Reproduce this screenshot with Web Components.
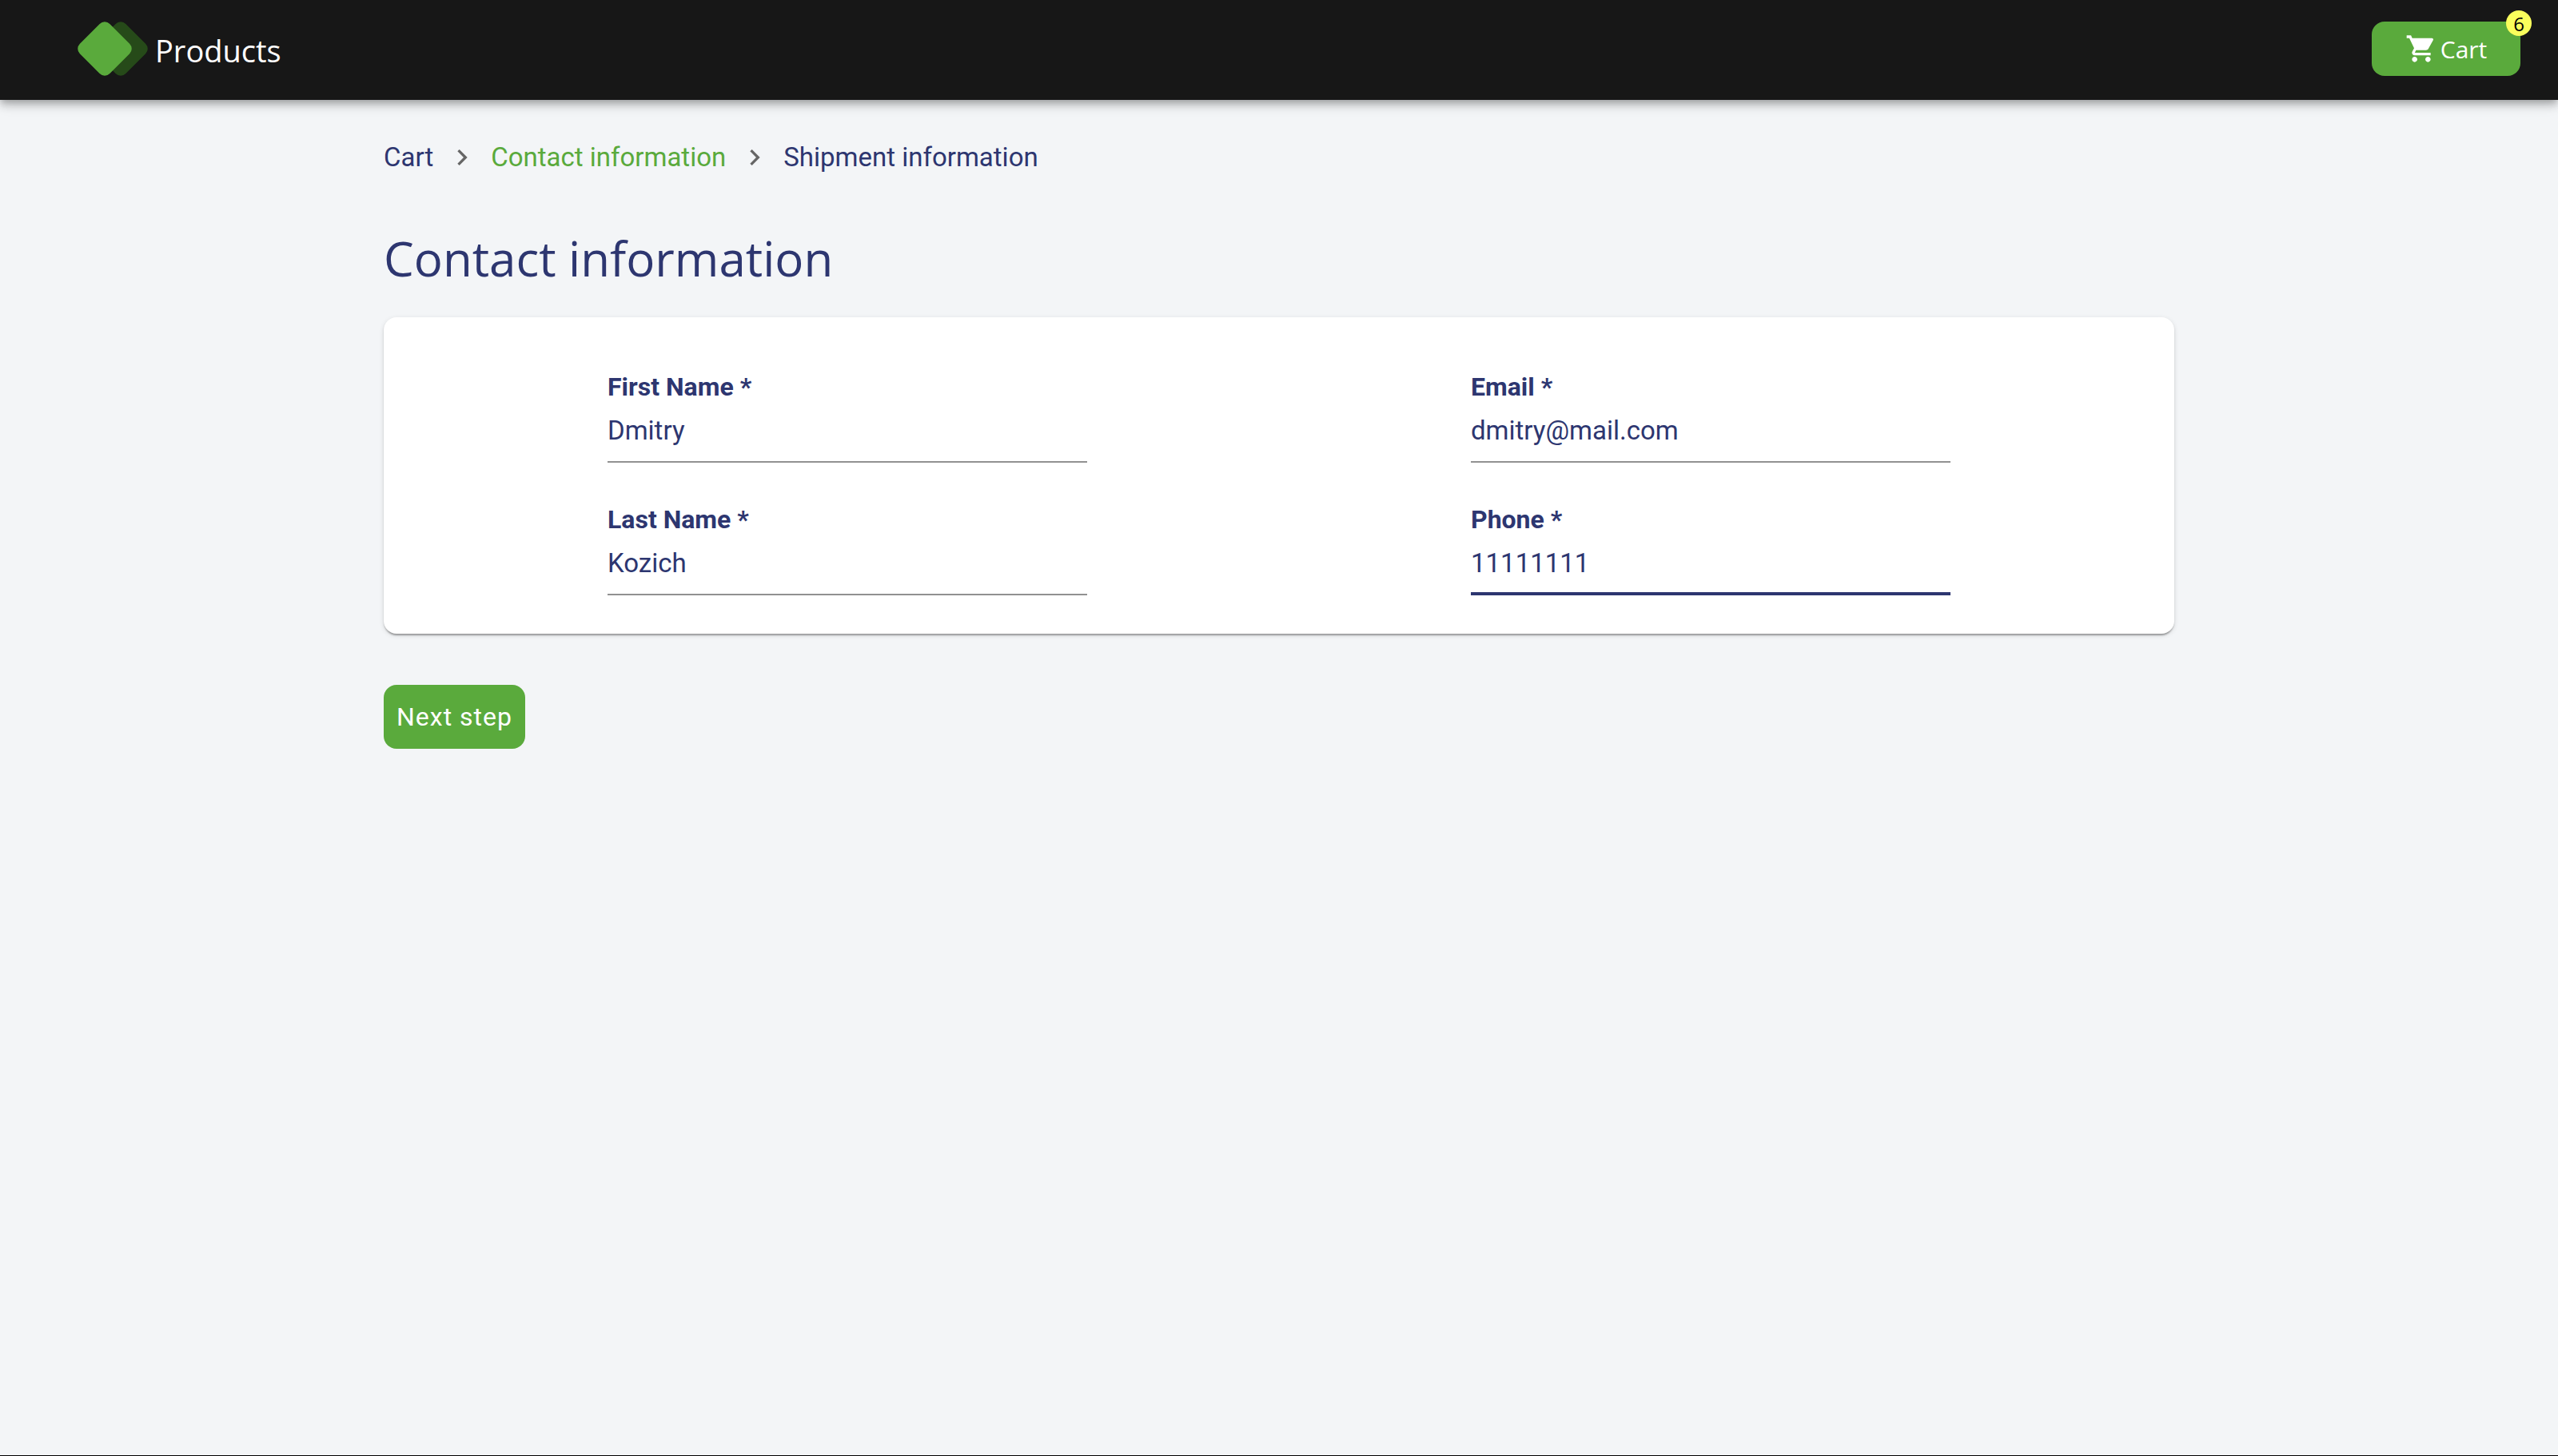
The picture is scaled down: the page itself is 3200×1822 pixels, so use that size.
<!DOCTYPE html>
<html lang="en">
<head>
<meta charset="utf-8">
<meta name="viewport" content="width=device-width, initial-scale=1">
<title>Contact information</title>
<style>
  :root {
    --green: #5aaa3c;
    --navy: #2d3670;
    --radius: 16px;
    --display: "Segoe UI", "Open Sans", sans-serif;
    --body: Roboto, sans-serif;
  }
  * { box-sizing: border-box; }
  body {
    margin: 0;
    min-height: 100vh;
    background: #f3f5f7;
    color: var(--navy);
    font: 400 32px/48px var(--body);
    border-bottom: 1px solid #000;
  }
</style>
</head>
<body>
<checkout-page></checkout-page>

<script>
const define = (name, html, setup) => {
  const template = document.createElement('template');
  template.innerHTML = '<style>*{box-sizing:border-box}</style>' + html;
  customElements.define(name, class extends HTMLElement {
    connectedCallback() {
      if (this.shadowRoot) return;
      this.attachShadow({ mode: 'open' }).append(template.content.cloneNode(true));
      if (setup) setup(this, this.shadowRoot);
    }
  });
};

define('brand-link', `
  <style>
    :host { display: block; }
    a { display: flex; align-items: center; gap: 8px; color: #fff; text-decoration: none; font: 400 38px/56px var(--display); }
    svg { display: block; width: 90px; height: 70px; }
    span { padding-top: 4px; }
  </style>
  <a href="#products">
    <svg viewBox="0 0 90 70" aria-hidden="true">
      <rect x="28.500" y="8.500" width="53" height="53" rx="9" transform="rotate(45 55 35)" fill="#264a19"/>
      <rect x="8.500" y="8.500" width="53" height="53" rx="9" transform="rotate(45 35 35)" fill="#5aaa3c"/>
    </svg>
    <span><slot></slot></span>
  </a>`);

define('cart-button', `
  <style>
    :host { display: block; position: relative; }
    button { display: flex; align-items: center; justify-content: center; gap: 4px; width: 186px; height: 68px;
      padding: 0; border: 0; border-radius: var(--radius); background: var(--green); color: #fff; font: 400 30px/48px var(--display); }
    svg { width: 40px; height: 40px; fill: currentColor; }
    button span { padding-top: 2px; }
    .badge { position: absolute; top: -14px; right: -14px; width: 32px; height: 32px; border-radius: 50%;
      background: #faff5c; color: #000; font: 400 24px/34px var(--display); text-align: center; }
  </style>
  <button type="button">
    <svg viewBox="0 0 24 24" aria-hidden="true"><path d="M7 18c-1.1 0-1.99.9-1.99 2S5.900 22 7 22s2-.9 2-2-.9-2-2-2zM1 2v2h2l3.600 7.590-1.350 2.450c-.16.28-.25.61-.25.960 0 1.100.9 2 2 2h12v-2H7.420c-.14 0-.25-.11-.25-.25l.03-.12.9-1.630h7.450c.75 0 1.410-.41 1.750-1.030l3.580-6.490c.08-.14.12-.31.12-.48 0-.55-.45-1-1-1H5.210l-.94-2H1zm16 16c-1.100 0-1.990.9-1.990 2s.89 2 1.990 2 2-.9 2-2-.9-2-2-2z"/></svg>
    <span><slot></slot></span>
  </button>
  <span class="badge"><slot name="count"></slot></span>`);

define('app-header', `
  <style>
    :host { display: block; position: relative; }
    header { display: flex; align-items: center; justify-content: space-between; height: 125px; padding: 0 47px 4px 96px;
      background: #171717; box-shadow: 0 4px 8px -2px rgba(0,0,0,.2), 0 8px 10px rgba(0,0,0,.14), 0 2px 20px rgba(0,0,0,.12); }
  </style>
  <header>
    <brand-link>Products</brand-link>
    <cart-button>Cart<span slot="count">6</span></cart-button>
  </header>`);

define('crumb-trail', `
  <style>
    :host { display: block; font-size: 33px; }
    ol { display: flex; align-items: center; margin: 0; padding: 0; list-style: none; }
    li { display: flex; align-items: center; }
    a { color: inherit; text-decoration: none; }
    a[aria-current] { color: var(--green); }
    svg { width: 40px; height: 40px; margin: 0 16px; fill: #666; }
  </style>
  <nav aria-label="Checkout steps"><ol></ol></nav>`,
  (host, root) => {
    const chevron = '<svg viewBox="0 0 24 24" aria-hidden="true"><path d="M10 6 8.590 7.410 13.170 12l-4.580 4.590L10 18l6-6z"/></svg>';
    root.querySelector('ol').innerHTML = host.getAttribute('steps').split('|').map((step, i) =>
      `<li>${i ? chevron : ''}<a href="#step-${i + 1}"${step === host.getAttribute('current') ? ' aria-current="step"' : ''}>${step}</a></li>`).join('');
  });

define('text-field', `
  <style>
    :host { display: block; }
    label { display: block; font-weight: 700; }
    input { display: block; width: 100%; height: 71px; padding: 6px 0 15px; border: 0; border-bottom: 2px solid #919191;
      border-radius: 0; outline: 0; background: none; color: inherit; font: inherit; font-size: 33px; }
    :host([active]) input { padding-bottom: 13px; border-bottom: 4px solid var(--navy); }
  </style>
  <label for="control"></label>
  <input id="control" required>`,
  (host, root) => {
    root.querySelector('label').textContent = host.getAttribute('label') + ' *';
    const input = root.querySelector('input');
    input.type = host.getAttribute('type') || 'text';
    input.value = host.getAttribute('value');
  });

define('form-card', `
  <style>
    :host { display: flex; justify-content: space-between; gap: 48px; padding: 63px 12.5% 48px; border-radius: var(--radius); background: #fff;
      box-shadow: 0 4px 2px -2px rgba(0,0,0,.2), 0 2px 2px rgba(0,0,0,.14), 0 2px 6px rgba(0,0,0,.12); }
    ::slotted(div) { display: grid; flex: 0 1 600px; gap: 47px; }
  </style>
  <slot></slot>`);

define('primary-button', `
  <style>
    :host { display: block; }
    button { padding: 16px; border: 0; border-radius: var(--radius); background: var(--green); color: #fff;
      font: inherit; letter-spacing: 1px; }
  </style>
  <button type="submit"><slot></slot></button>`);

define('checkout-page', `
  <style>
    :host { display: block; }
    main { width: 70%; margin: 0 auto; padding: 48px 0; }
    h1 { margin: 54px 0 26px; font: 400 60px/96px var(--display); }
    primary-button { margin-top: 64px; }
  </style>
  <app-header></app-header>
  <main>
    <crumb-trail steps="Cart|Contact information|Shipment information" current="Contact information"></crumb-trail>
    <h1>Contact information</h1>
    <form>
      <form-card>
        <div>
          <text-field label="First Name" value="Dmitry"></text-field>
          <text-field label="Last Name" value="Kozich"></text-field>
        </div>
        <div>
          <text-field label="Email" type="email" value="dmitry@mail.com"></text-field>
          <text-field label="Phone" type="tel" value="11111111" active></text-field>
        </div>
      </form-card>
      <primary-button>Next step</primary-button>
    </form>
  </main>`);
</script>
</body>
</html>
